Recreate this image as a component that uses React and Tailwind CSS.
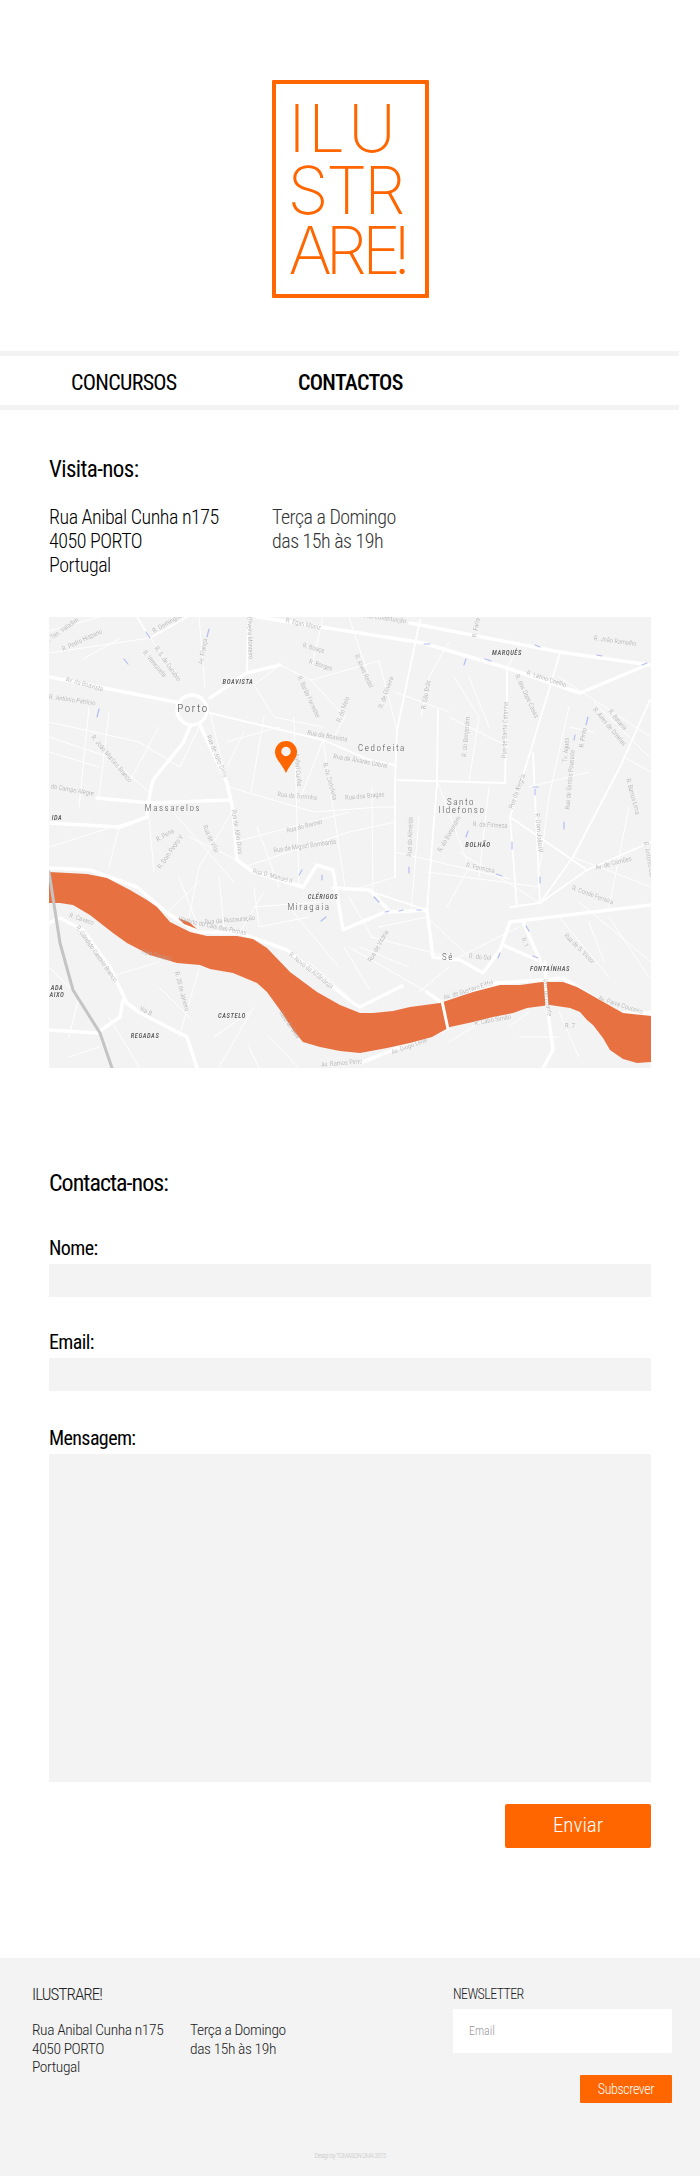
const FONT = "font-['Roboto',sans-serif] [font-stretch:75%]";

const MAJOR = [
  "0,60 131,86",
  "161,81 198,56 231,48",
  "141,110 134,126 104,163 101,176 98,200 71,210 0,206",
  "48,181 101,186 181,183",
  "151,108 178,166 184,193 188,243 204,255 254,270",
  "208,0 311,16 374,26 458,51 531,76 598,48",
  "361,6 511,35 601,48",
  "0,251 41,253 88,270 118,296 148,315 191,316 238,333 304,386 311,390",
  "311,390 353,369",
  "378,375 393,386",
  "448,366 494,363 514,361 544,380 571,396 602,396",
  "393,386 399,411 311,446",
  "420,375 448,366",
  "496,345 498,388 504,433 494,451",
  "0,413 48,416 71,400 74,383 91,396 138,420 148,451",
  "0,306 11,301 34,313 61,350 78,386",
  "254,270 268,248 284,253 294,313 321,301",
  "284,271 321,273 341,295 378,293 384,340 411,343 434,356 451,333 461,305 602,288",
  "311,306 336,295",
  "474,305 493,348",
  "454,328 488,343",
];

const MEDIUM = [
  "161,96 274,123 321,143 346,148",
  "371,3 348,113 346,163 456,166",
  "458,51 458,83 456,166",
  "511,36 481,136 461,200 468,290",
  "484,136 491,286",
  "601,83 571,150 524,240 491,286 461,290",
  "88,0 101,21 138,0",
  "198,56 199,0",
  "389,93 388,166",
  "378,293 388,166",
  "346,163 346,260",
  "311,271 378,293",
  "461,200 538,253 602,225",
  "491,286 538,253",
];

const MINOR = [
  "0,36 101,21", "0,14 50,0", "34,42 70,22", "101,21 129,58", "150,0 156,70", "231,48 262,63 296,100 285,120",
  "231,48 205,68 225,100 274,110", "274,0 263,48", "300,0 320,60", "262,63 330,44", "330,44 348,113",
  "0,105 90,125 131,150 151,108", "0,120 60,140 101,176", "0,135 50,150", "40,90 30,190", "60,95 50,180", "110,110 80,165",
  "161,96 178,166", "178,125 230,110", "195,115 178,150", "180,170 265,195 330,190 346,190", "215,100 202,175", "245,100 250,270",
  "274,123 296,270", "274,123 250,185", "184,193 150,250 140,300", "120,190 185,265", "186,225 300,195", "195,250 300,215 346,205",
  "208,210 230,270", "70,210 60,250", "100,200 105,255", "140,220 188,243", "0,230 80,205",
  "323,170 324,280", "300,280 323,320", "300,330 378,375", "346,260 311,271", "370,200 362,295", "389,166 420,250 398,290",
  "400,100 460,130", "405,60 430,100 420,165", "470,30 458,51", "400,25 380,60 372,100", "346,75 400,95", "420,60 440,110",
  "410,235 491,286", "346,235 461,262", "378,255 491,270", "440,170 430,260", "510,60 602,120", "520,90 500,180 491,250",
  "480,170 540,155", "520,110 545,115", "545,85 600,140", "575,140 602,155", "524,240 602,270", "580,190 560,290",
  "530,285 602,345", "510,300 560,360", "470,310 400,345", "540,305 555,345", "560,300 600,360", "378,300 420,340",
  "330,310 378,300", "322,320 400,340", "311,330 360,350", "400,350 370,375", "240,290 290,350", "205,270 210,310 260,300",
  "215,275 190,316", "130,260 150,312", "60,270 100,300", "150,265 118,296", "170,260 175,310", "205,290 270,285",
  "295,330 320,372", "260,345 300,380", "150,352 130,420", "60,360 110,345", "205,390 170,450", "220,420 250,451",
  "165,420 200,395", "110,370 140,400", "60,400 90,450", "200,430 210,451", "400,425 440,400", "460,410 480,395", "510,395 530,440",
  "470,420 510,420", "20,440 50,430", "0,350 30,380 20,420",
];

const PLACES = [
  ["Porto", 144, 95, 11, "#444"], ["Massarelos", 124, 194, 9, "#555"], ["Cedofeita", 333, 134, 9, "#555"],
  ["Santo", 412, 188, 9, "#555"], ["Ildefonso", 413, 196, 9, "#555"], ["Miragaia", 260, 293, 9, "#555"], ["Sé", 399, 343, 9, "#555"],
];

const HOODS = [
  ["BOAVISTA", 189, 67], ["MARQUÊS", 458, 38], ["BOLHÃO", 429, 230], ["CLÉRIGOS", 274, 282], ["CASTELO", 183, 401],
  ["REGADAS", 96, 421], ["FONTAÍNHAS", 501, 354], ["IDA", 8, 203], ["ADA", 8, 373], ["AIXO", 8, 380],
];

const STREETS = [
  ["Av. da Boavista", 35, 69, 15], ["R. Egas Moniz", 254, 9, 12], ["R. Domingos", 119, 8, -30], ["R. Pedro Hispano", 34, 25, -25],
  ["R. S. de Outubro", 117, 48, 55], ["R. Venezuela", 104, 48, 50], ["Av. França", 156, 35, -80], ["R. Ten. Valadim", 14, 15, -35],
  ["Oliveira Monteiro", 199, 21, 88], ["R. Bouça", 264, 33, 15], ["R. Borges", 271, 50, 18], ["R. Barão Forrester", 258, 81, 65],
  ["R. do Melo", 296, 93, -70], ["R. Alves Redol", 313, 55, 65], ["R. António Patrício", 23, 85, 8], ["R. João Martins Branco", 61, 143, 50],
  ["Rua de Júlio Dinis", 166, 140, 68], ["Rua de Júlio Dinis", 186, 215, 82], ["do Campo Alegre", 23, 175, 10], ["Rua da Boavista", 278, 121, 10],
  ["Rua de Álvares Cabral", 311, 146, 10], ["R. de Cedofeita", 279, 165, 75], ["Aníbal Cunha", 247, 153, 85], ["Rua da Torrinha", 248, 181, 5],
  ["Rua dos Bragas", 316, 181, -5], ["Rua do Breiner", 256, 211, -15], ["Rua de Miguel Bombarda", 256, 231, -8], ["R. Pena", 117, 220, -30],
  ["R. Dom Pedro V", 123, 236, -55], ["Rua de Vilar", 160, 223, 65], ["Rua D. Manuel II", 223, 261, 15],
  ["R. da Constituição", 334, 3, 8], ["R. Faria", 429, 11, -80], ["R. João Ramalho", 566, 26, 8], ["R. Latino Coelho", 497, 64, 18],
  ["R. dos Doze Casas", 476, 80, 65], ["R. de Oliveira", 339, 76, -70], ["R. São Brás", 379, 78, -80], ["R. do Bonjardim", 419, 120, -85],
  ["Rua de Santa Catarina", 458, 113, -88], ["Rua da Alegria", 470, 175, -70], ["R. Pinto", 536, 121, -80], ["Tv. Águas", 519, 133, -85],
  ["Rua de Santos Pousada", 523, 163, -85], ["R. Aires de Ornelas", 559, 111, 50], ["R. Bataria", 567, 104, 50], ["R. Barros Lima", 582, 180, 75],
  ["R. Dom João IV", 488, 216, 85], ["R. da Firmeza", 441, 210, 3], ["R. do Bonjardim", 402, 218, -60], ["Rua do Almeida", 363, 220, -88],
  ["R. Formosa", 431, 253, 12], ["Av. de Camões", 565, 248, -15], ["R. Conde Ferreira", 543, 280, 20], ["R. António Car", 598, 243, 80],
  ["R. Cavaco", 32, 304, 18], ["R. Cândido Castelo Branco", 46, 338, 55], ["Cais Cavaco", 107, 340, 15], ["Viaduto do Cais das Pedras", 163, 311, 12],
  ["Rua da Restauração", 181, 305, -5], ["R. Nova da Alfândega", 261, 355, 38], ["R. 28 de Janeiro", 131, 375, 75], ["Via B", 96, 396, 25],
  ["Cais de Gaia", 239, 409, 55], ["Av. Ramos Pinto", 293, 448, -5], ["Rua de Vitória", 331, 330, -60], ["R. do Sol", 431, 342, 5],
  ["Av. de Gustavo Eiffel", 420, 375, -17], ["R. Cabo Simão", 444, 405, -10], ["Av. Diogo Leite", 361, 431, -20], ["Ptn. do Infante", 496, 381, 82],
  ["Av. Paiva Couceiro", 571, 390, 18], ["Rua de S. Victor", 529, 333, 45], ["R. 1", 474, 326, 70], ["R. 7", 521, 411, 0],
];

const ARROWS = [
  "97,15 101,21", "160,12 158,20", "75,42 79,47", "50,92 48,100", "375,27 381,27", "417,42 415,48", "436,42 442,44", "486,28 491,30",
  "548,38 553,39", "593,48 598,46", "539,100 537,108", "526,118 525,123", "489,170 484,170", "486,172 486,178", "515,205 515,212",
  "463,225 463,232", "360,250 360,256", "419,214 417,220", "447,257 453,259", "491,260 491,266", "325,280 330,285", "336,295 340,294",
  "350,294 354,293", "368,293 372,293", "277,300 272,304", "253,253 250,258", "273,258 273,263", "477,309 480,314", "484,339 489,341", "451,336 449,341",
];

const RIVER =
  "0,255 38,257 58,261 81,273 98,283 108,290 121,305 141,315 158,319 188,319 204,322 218,331 241,355 268,375 291,388 311,396 324,396 344,394 361,390 391,386 424,375 451,368 471,368 493,365 514,365 528,370 551,383 574,396 602,399 602,445 588,446 574,442 561,433 554,421 544,408 538,403 531,395 521,391 501,388 478,391 464,396 444,400 424,405 401,410 383,420 361,426 338,431 311,436 291,434 271,430 254,425 244,413 231,393 218,375 208,366 184,356 161,352 151,348 128,346 101,338 78,326 64,316 41,298 24,288 11,286 0,286";

function Roads({ items, width, color = "#ffffff" }) {
  return items.map((points, i) => (
    <polyline key={i} points={points} fill="none" stroke={color} strokeWidth={width} strokeLinecap="round" strokeLinejoin="round" />
  ));
}

function MapView() {
  return (
    <svg viewBox="0 0 602 451" className="block w-full h-[451px] blur-[0.4px]" style={{ fontFamily: "Roboto, sans-serif" }}>
      <rect width="602" height="451" fill="#f3f3f3" />
      <Roads items={MINOR} width={1} />
      <Roads items={MEDIUM} width={1.8} />
      <Roads items={MAJOR} width={3.5} />
      <circle cx="143" cy="93" r="15" fill="none" stroke="#ffffff" strokeWidth="3.5" />
      <polygon points={RIVER} fill="#e87142" />
      <polygon points="129,301 140,305 148,312 135,307" fill="#e87142" />
      <Roads items={["393,384 399,412", "496,362 498,390"]} width={3} />
      <Roads items={["0,255 11,326 24,373 51,416 63,451"]} width={3} color="#c4c4c4" />
      <Roads items={ARROWS} width={1.2} color="#b4bdf0" />
      {STREETS.map(([label, x, y, rot], i) => (
        <text key={i} x={x} y={y} transform={`rotate(${rot} ${x} ${y})`} textAnchor="middle" fontSize="6.5" fill="#aaaaaa">
          {label}
        </text>
      ))}
      {HOODS.map(([label, x, y]) => (
        <text key={label} x={x} y={y} textAnchor="middle" fontSize="6.5" fontWeight="500" fontStyle="italic" letterSpacing="0.6" fill="#555555">
          {label}
        </text>
      ))}
      {PLACES.map(([label, x, y, size, color]) => (
        <text key={label} x={x} y={y} textAnchor="middle" fontSize={size} letterSpacing="1.6" fill={color}>
          {label}
        </text>
      ))}
      <path d="M237 156 C233 147 226 142 226 135 A11 11 0 0 1 248 135 C248 142 241 147 237 156 Z" fill="#ff6600" />
      <circle cx="237" cy="134.500" r="4.700" fill="#f3f3f3" />
    </svg>
  );
}

function Logo() {
  // one x per glyph, so each letter lands where the reference has it
  const lines = [
    ["ILU", "12.5 32 72", 67.5],
    ["STR", "11.5 50 88", 129.5],
    ["ARE!", "12.5 49.5 86 117", 190],
  ];
  return (
    <div className="w-[157px] h-[218px] border-4 border-[#ff6600] rounded-[1px]">
      <svg viewBox="0 0 149 210" className="block w-[149px] h-[210px]" style={{ fontFamily: "Inter, sans-serif" }}>
        {lines.map(([word, xs, y]) => (
          <text key={word} x={xs} y={y} fontSize="66" fontWeight="200" fill="#ff6600">
            {word}
          </text>
        ))}
      </svg>
    </div>
  );
}

function Field({ label, height, gap }) {
  return (
    <div className={gap}>
      <label className="block text-[20px] leading-[26px] tracking-[-0.6px] text-black font-normal">{label}</label>
      <div className={`mt-[3px] bg-[#f3f3f3] ${height}`} />
    </div>
  );
}

export default function App() {
  return (
    <div className={`w-full bg-white text-black font-light ${FONT}`}>
      {/* Logo */}
      <header className="h-[351px] pt-[80px] flex justify-center">
        <Logo />
      </header>

      {/* Nav */}
      <nav className="w-[679px] h-[59px] border-y-[5px] border-[#f3f3f3] flex items-center pl-[71px] pt-[3px] text-[22px] tracking-[-0.7px]">
        <a className="w-[227px] font-normal">CONCURSOS</a>
        <a className="font-medium">CONTACTOS</a>
      </nav>

      <main className="px-[49px]">
        {/* Visita */}
        <h2 className="mt-[46px] text-[23px] leading-[28px] tracking-[-0.6px] font-normal">Visita-nos:</h2>
        <div className="mt-[21px] flex text-[20px] leading-[24px] tracking-[-0.5px]">
          <p className="w-[223px]">
            Rua Anibal Cunha n175
            <br />
            4050 PORTO
            <br />
            Portugal
          </p>
          <p className="text-[#333]">
            Terça a Domingo
            <br />
            das 15h às 19h
          </p>
        </div>

        <div className="mt-[40px]">
          <MapView />
        </div>

        {/* Contacto */}
        <h2 className="mt-[99px] text-[24px] leading-[32px] tracking-[-1px] font-normal">Contacta-nos:</h2>
        <form className="mt-[36px]">
          <Field label="Nome:" height="h-[33px]" />
          <Field label="Email:" height="h-[33px]" gap="mt-[32px]" />
          <Field label="Mensagem:" height="h-[328px]" gap="mt-[34px]" />
          <div className="mt-[22px] flex justify-end">
            <button type="button" className="w-[146px] h-[44px] bg-[#ff6600] rounded-[2px] text-white text-[21px] font-light">
              Enviar
            </button>
          </div>
        </form>
      </main>

      {/* Footer */}
      <footer className="mt-[110px] h-[218px] bg-[#f3f3f3] px-[28px] pt-[24px] text-[#222]">
        <div className="flex justify-between">
          <div className="pl-[4px] pt-[1px]">
            <p className="text-[17px] leading-[22px] tracking-[-0.9px]">ILUSTRARE!</p>
            <div className="mt-[16px] flex text-[15.500px] leading-[18.500px] tracking-[-0.4px]">
              <p className="w-[158px]">
                Rua Anibal Cunha n175
                <br />
                4050 PORTO
                <br />
                Portugal
              </p>
              <p>
                Terça a Domingo
                <br />
                das 15h às 19h
              </p>
            </div>
          </div>
          <div className="w-[219px]">
            <p className="text-[14px] leading-[20px] pt-[2px] tracking-[-0.6px]">NEWSLETTER</p>
            <div className="mt-[5px] h-[44px] bg-white rounded-[1px] flex items-center pl-[16px] text-[12px] text-[#999]">
              Email
            </div>
            <div className="mt-[22px] flex justify-end">
              <button type="button" className="w-[92px] h-[28px] bg-[#ff6600] rounded-[1px] text-white text-[14px] tracking-[-0.4px] font-light">
                Subscrever
              </button>
            </div>
          </div>
        </div>
        <p className="mt-[47px] text-center text-[7px] leading-[12px] tracking-[-0.6px] text-[#c8c8c8]">Design by TOMASON OMA 2015</p>
      </footer>
    </div>
  );
}
